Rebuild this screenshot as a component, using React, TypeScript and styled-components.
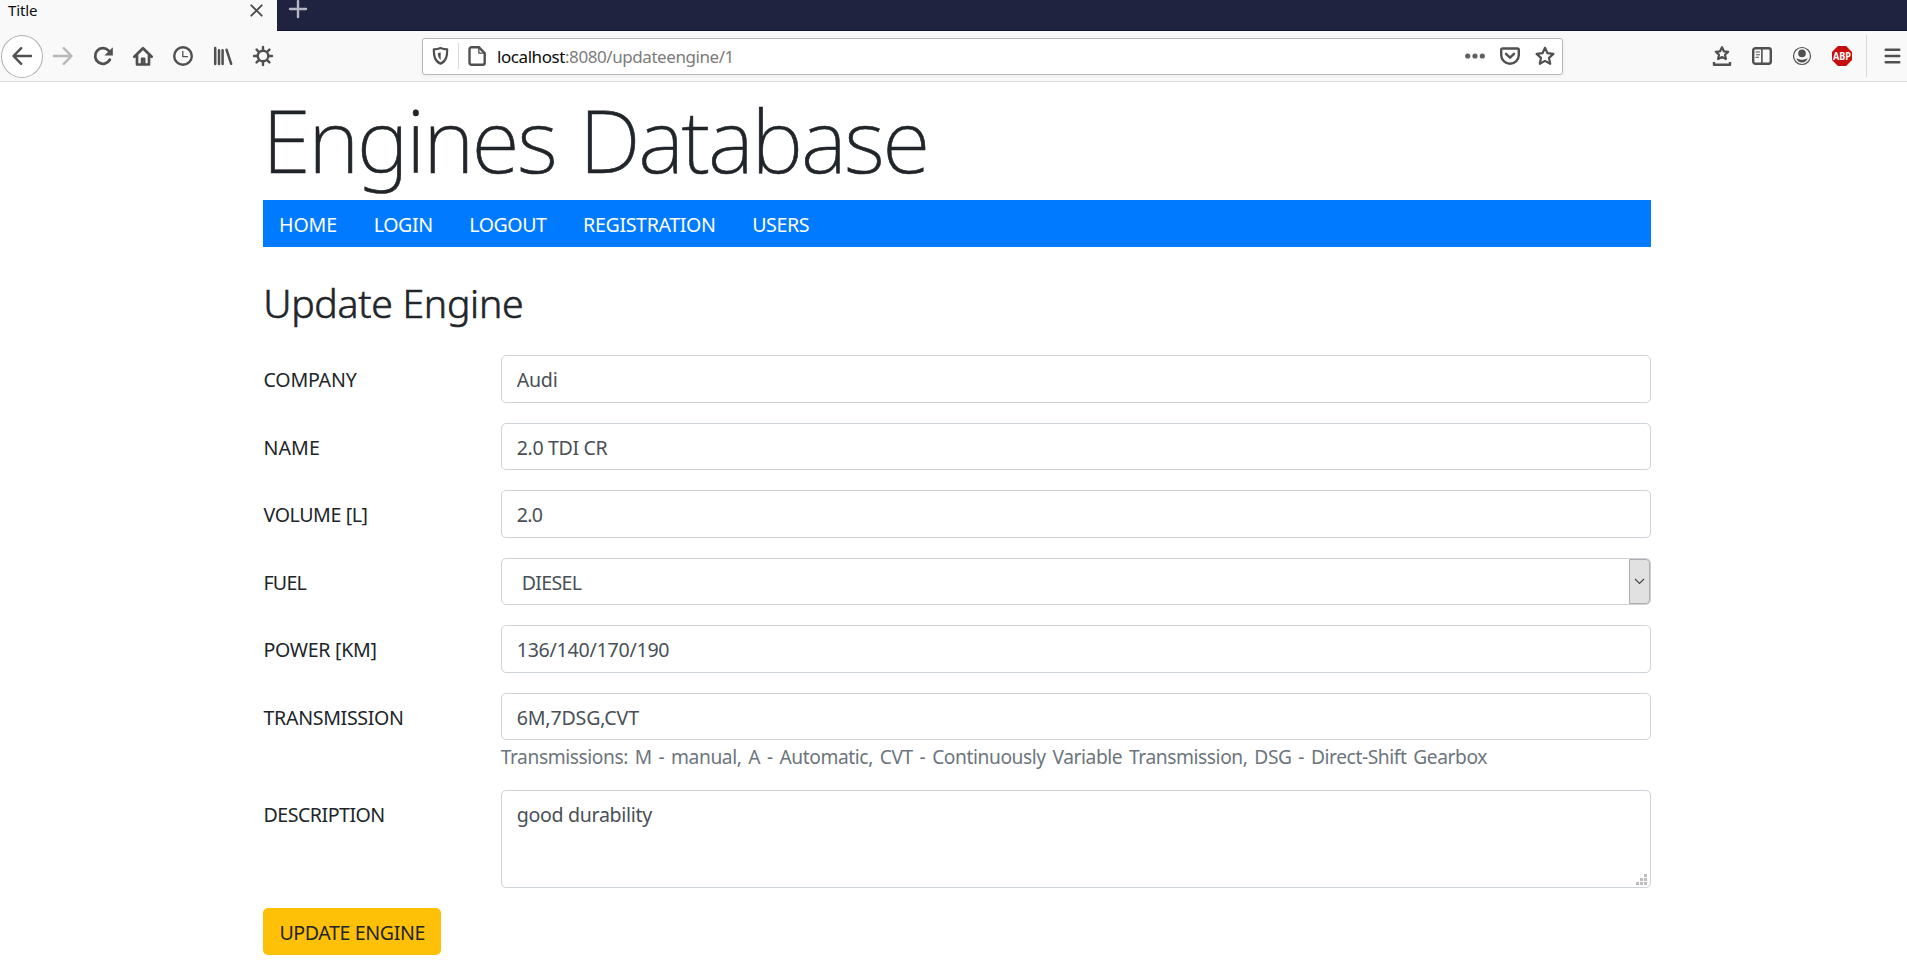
import React from 'react';
import styled, { createGlobalStyle } from 'styled-components';

const GlobalStyle = createGlobalStyle`
  *, *::before, *::after { box-sizing: border-box; }
  html, body { margin: 0; padding: 0; background: #fff; overflow: hidden; }
  body { font-family: "Noto Sans", "Open Sans", sans-serif; color: #212529; font-size: 19.6px; }
`;

/* ---------- browser chrome ---------- */
const TabStrip = styled.div`
  display: flex;
  height: 31px;
  background: #202340;
  border-bottom: 1px solid #14162e;
`;
const Tab = styled.div`
  display: flex;
  justify-content: space-between;
  width: 277px;
  height: 31px;
  padding: 0 13px 0 8px;
  background: #f9f9fa;
  color: #0c0c0d;
`;
const TabTitle = styled.span`
  font-size: 15px;
  line-height: 21px;
  letter-spacing: -0.1px;
`;
const CloseIcon = styled.svg`
  width: 15px;
  height: 15px;
  margin-top: 3px;
`;
const PlusIcon = styled.svg`
  width: 20px;
  height: 20px;
  margin: -1px 0 0 11px;
`;
const Toolbar = styled.div`
  display: flex;
  align-items: center;
  height: 51px;
  background: #f9f9fa;
  border-bottom: 1px solid #dfdfe0;
`;
const ToolButton = styled.span`
  display: flex;
  flex: none;
  align-items: center;
  justify-content: center;
  width: 40px;
  height: 40px;
`;
const BackButton = styled(ToolButton)`
  width: 42px;
  height: 43px;
  margin: 0 0 0 1px;
  border: 1px solid #b1b1b3;
  border-radius: 50%;
  background: #fff;
`;
const Glyph = styled.svg<{ $dim?: boolean; $thin?: boolean }>`
  display: block;
  width: 20px;
  height: 20px;
  overflow: visible;
  fill: none;
  stroke: ${p => (p.$dim ? '#b8b8b9' : '#505052')};
  stroke-width: ${p => (p.$thin ? 1.2 : 2.4)};
  stroke-linecap: round;
  stroke-linejoin: round;
`;
const UrlBar = styled.div`
  display: flex;
  align-items: center;
  width: 1141px;
  height: 37px;
  margin: 0 139px;
  border: 1px solid #b9b9bb;
  border-radius: 3px;
  background: #fff;
  box-shadow: 0 1px 4px rgba(0, 0, 0, 0.06);
`;
const UrlIcon = styled.span<{ $w: number }>`
  display: flex;
  justify-content: center;
  width: ${p => p.$w}px;
`;
const UrlDivider = styled.span`
  width: 1px;
  height: 26px;
  margin-left: 1px;
  background: #d9d9da;
`;
const UrlText = styled.span`
  flex: 1;
  padding: 2px 0 0 2px;
  font-size: 17px;
  line-height: 24px;
  letter-spacing: -0.43px;
  color: #7b7b7c;
`;
const UrlHost = styled.span`
  color: #0c0c0d;
`;
const BarDivider = styled.span`
  width: 1px;
  height: 42px;
  margin: 0 17px 0 4px;
  background: #dcdcdd;
`;

/* ---------- page ---------- */
const Container = styled.main`
  width: 1387.5px;
  margin-left: 263.2px;
`;
const Title = styled.h1`
  height: 118px;
  margin: 0 0 0 -1px;
  padding-top: 3px;
  font-size: 87.5px;
  font-weight: 200;
  line-height: 108px;
  letter-spacing: -2.2px;
  word-spacing: 3px;
  white-space: nowrap;
  -webkit-text-stroke: 0.6px #212529;
`;
const Nav = styled.nav`
  display: flex;
  align-items: center;
  gap: 36.6px;
  height: 47px;
  padding-left: 15.8px;
  background: #007bff;
`;
const NavLink = styled.a<{ $ls: number }>`
  padding-top: 2px;
  color: #fff;
  line-height: 30px;
  letter-spacing: ${p => p.$ls}px;
`;
const Heading = styled.h2`
  margin: 32px 0 28.2px;
  font-size: 39.2px;
  font-weight: 300;
  line-height: 48px;
  letter-spacing: -0.3px;
  -webkit-text-stroke: 0.6px #212529;
`;
const Form = styled.form`
  display: flex;
  flex-direction: column;
  gap: 20px;
`;
const Row = styled.div`
  display: grid;
  grid-template-columns: 237.5px 1150px;
  align-items: start;
`;
const Label = styled.label<{ $ls: number }>`
  padding-top: 10px;
  line-height: 30px;
  letter-spacing: ${p => p.$ls}px;
  text-indent: 0.3px;
`;
const Field = styled.div`
  position: relative;
`;
const Control = styled.input<{ $ls: number; $inset?: number; $h?: number }>`
  display: block;
  width: 100%;
  height: ${p => p.$h ?? 47.5}px;
  margin: 0;
  padding: 8.5px 15px 6.5px ${p => p.$inset ?? 15}px;
  border: 1px solid #ced4da;
  border-radius: 5px;
  background: #fff;
  color: #495057;
  font: inherit;
  line-height: 30px;
  letter-spacing: ${p => p.$ls}px;
  appearance: none;
  resize: none;
  outline: none;
  overflow: hidden;
`;
const SelectControl = styled(Control)`
  padding-top: 9.5px;
  padding-bottom: 5.5px;
`;
const SelectArrow = styled.span`
  position: absolute;
  top: 1px;
  right: 1px;
  bottom: 1px;
  display: flex;
  align-items: center;
  justify-content: center;
  width: 21px;
  border: 1px solid #adadad;
  border-radius: 0 4px 4px 0;
  background: #e1e1e1;
`;
const Grip = styled.svg`
  position: absolute;
  right: 4px;
  bottom: 3px;
  width: 11px;
  height: 11px;
  fill: #bdbdbd;
`;
const Hint = styled.small`
  display: block;
  margin: 4px 0 1px;
  font-size: 19.2px;
  line-height: 25px;
  letter-spacing: -0.42px;
  word-spacing: 2.25px;
  color: #6c757d;
  white-space: nowrap;
`;
const Submit = styled.button`
  align-self: flex-start;
  width: 178px;
  height: 47px;
  padding: 2px 0 0;
  border: 0;
  border-radius: 5px;
  background: #ffc107;
  color: #212529;
  font: inherit;
  letter-spacing: -0.39px;
`;

const STAR = 'M10 1.8l2.5 5.4 5.9.7-4.4 4 1.2 5.9-5.2-2.9-5.2 2.9L6 11.9l-4.4-4 5.9-.7z';

const links: [string, number][] = [
  ['HOME', -0.1],
  ['LOGIN', -0.4],
  ['LOGOUT', -0.45],
  ['REGISTRATION', -0.35],
  ['USERS', -0.42],
];

interface RowData {
  label: string;
  labelLs: number;
  value: string;
  valueLs: number;
  kind?: 'select' | 'textarea';
  hint?: string;
}

const rows: RowData[] = [
  { label: 'COMPANY', labelLs: -0.2, value: 'Audi', valueLs: -0.23 },
  { label: 'NAME', labelLs: 0.1, value: '2.0 TDI CR', valueLs: -0.35 },
  { label: 'VOLUME [L]', labelLs: -0.41, value: '2.0', valueLs: -0.7 },
  { label: 'FUEL', labelLs: -0.8, value: 'DIESEL', valueLs: -0.7, kind: 'select' },
  { label: 'POWER [KM]', labelLs: -0.3, value: '136/140/170/190', valueLs: -0.25 },
  {
    label: 'TRANSMISSION',
    labelLs: -0.32,
    value: '6M,7DSG,CVT',
    valueLs: -0.17,
    hint: 'Transmissions: M - manual, A - Automatic, CVT - Continuously Variable Transmission, DSG - Direct-Shift Gearbox',
  },
  { label: 'DESCRIPTION', labelLs: -0.5, value: 'good durability', valueLs: -0.32, kind: 'textarea' },
];

function FieldControl({ row }: { row: RowData }) {
  if (row.kind === 'select') {
    return (
      <>
        <SelectControl as="select" $ls={row.valueLs} $inset={20} defaultValue={row.value}>
          <option>{row.value}</option>
        </SelectControl>
        <SelectArrow>
          <svg width="11" height="7" viewBox="0 0 11 7" fill="none" stroke="#444" strokeWidth="1.2">
            <path d="M1 1l4.5 4.5L10 1" />
          </svg>
        </SelectArrow>
      </>
    );
  }
  if (row.kind === 'textarea') {
    return (
      <>
        <Control as="textarea" $ls={row.valueLs} $h={98} defaultValue={row.value} />
        <Grip viewBox="0 0 11 11">
          <rect x="8" y="0" width="3" height="3" />
          <rect x="4" y="4" width="3" height="3" />
          <rect x="8" y="4" width="3" height="3" />
          <rect x="0" y="8" width="3" height="3" />
          <rect x="4" y="8" width="3" height="3" />
          <rect x="8" y="8" width="3" height="3" />
        </Grip>
      </>
    );
  }
  return <Control $ls={row.valueLs} defaultValue={row.value} />;
}

function BrowserChrome() {
  return (
    <header>
      <TabStrip>
        <Tab>
          <TabTitle>Title</TabTitle>
          <CloseIcon viewBox="0 0 15 15" stroke="#4a4a4c" strokeWidth="1.9" strokeLinecap="round">
            <path d="M2.3 2.3l10.4 10.4M12.7 2.3L2.3 12.7" />
          </CloseIcon>
        </Tab>
        <PlusIcon viewBox="0 0 20 20" stroke="#b6b7c3" strokeWidth="2.4" strokeLinecap="round">
          <path d="M10 2v16M2 10h16" />
        </PlusIcon>
      </TabStrip>
      <Toolbar>
        <BackButton>
          <Glyph viewBox="0 0 20 20">
            <path d="M19 10H1.500M9.200 2.200L1.500 10l7.700 7.800" />
          </Glyph>
        </BackButton>
        <ToolButton>
          <Glyph viewBox="0 0 20 20" $dim>
            <path d="M1 10h17.500M10.800 2.200L18.500 10l-7.700 7.800" />
          </Glyph>
        </ToolButton>
        <ToolButton>
          <Glyph viewBox="0 0 20 20">
            <path d="M16.800 13.800A7.800 7.800 0 1 1 15.600 4.600" strokeWidth="2.800" />
            <path d="M19.800 1.200v8.400h-8.400z" fill="#505052" stroke="none" />
          </Glyph>
        </ToolButton>
        <ToolButton>
          <Glyph viewBox="0 0 20 20">
            <path d="M1.300 10.800L10 2.200l8.700 8.600M4 9.500v9h12v-9" strokeWidth="2.700" />
            <path d="M8.900 18v-5.300h2.400V18" strokeWidth="2.300" />
          </Glyph>
        </ToolButton>
        <ToolButton>
          <Glyph viewBox="0 0 20 20">
            <circle cx="10" cy="10" r="8.800" />
            <path d="M9.800 5.500v5.200h4.700" strokeWidth="1.300" />
          </Glyph>
        </ToolButton>
        <ToolButton>
          <Glyph viewBox="0 0 20 20">
            <path d="M2.200 2v16M6 4.200V18M9.600 4.200V18M13.600 3.800l4.600 14" strokeWidth="2.500" />
          </Glyph>
        </ToolButton>
        <ToolButton>
          <Glyph viewBox="0 0 20 20">
            <circle cx="10" cy="10" r="5.300" />
            <path d="M10 1v3M10 16v3M1 10h3M16 10h3M3.600 3.600l2 2M14.400 14.400l2 2M3.600 16.400l2-2M14.400 5.600l2-2" />
          </Glyph>
        </ToolButton>

        <UrlBar>
          <UrlIcon $w={34}>
            <Glyph viewBox="0 0 20 20">
              <path d="M10.500 2C8 3 5.800 3.300 3.800 3.400c0 6.600.8 11.600 6.700 14.300 5.900-2.700 6.700-7.700 6.700-14.300-2-.1-4.200-.4-6.700-1.400z" strokeWidth="2.200" />
              <path d="M10.700 6.300v7.600C8.700 12.300 7.800 10 7.800 7c1.100-.1 2-.3 2.900-.7z" fill="#505052" stroke="none" />
            </Glyph>
          </UrlIcon>
          <UrlDivider />
          <UrlIcon $w={36}>
            <Glyph viewBox="0 0 20 20">
              <path d="M4.500 1.200h7.300l5.900 5.900v9.700a2 2 0 0 1-2 2H4.500a2 2 0 0 1-2-2V3.200a2 2 0 0 1 2-2z" />
              <path d="M11.800 1.800v5.300h5.300" strokeWidth="1.300" />
            </Glyph>
          </UrlIcon>
          <UrlText>
            <UrlHost>localhost</UrlHost>:8080/updateengine/1
          </UrlText>
          <UrlIcon $w={35}>
            <Glyph viewBox="0 0 20 20">
              <g fill="#606062" stroke="none">
                <circle cx="2.700" cy="10" r="2.600" />
                <circle cx="10" cy="10" r="2.600" />
                <circle cx="17.300" cy="10" r="2.600" />
              </g>
            </Glyph>
          </UrlIcon>
          <UrlIcon $w={35}>
            <Glyph viewBox="0 0 20 20">
              <path d="M2.500 2.500h15a1.300 1.300 0 0 1 1.300 1.300V9a8.800 8.800 0 0 1-17.600 0V3.800a1.300 1.300 0 0 1 1.300-1.300z" />
              <path d="M6 7.800l4 3.900 4-3.900" />
            </Glyph>
          </UrlIcon>
          <UrlIcon $w={35}>
            <Glyph viewBox="0 0 20 20">
              <path d={STAR} strokeWidth="2.200" />
            </Glyph>
          </UrlIcon>
        </UrlBar>

        <ToolButton>
          <Glyph viewBox="0 0 20 20">
            <path d="M10 1.200l1.900 4.100 4.300.5-3.200 3 .9 4.300L10 11l-3.900 2.100.9-4.300-3.200-3 4.300-.5z" strokeWidth="2.200" />
            <path d="M2 16v2.800h16V16" strokeLinecap="butt" />
          </Glyph>
        </ToolButton>
        <ToolButton>
          <Glyph viewBox="0 0 20 20">
            <rect x="1.200" y="2.200" width="17.600" height="15.600" rx="2.200" />
            <path d="M9.900 2v16" strokeWidth="1.600" />
            <path d="M4 6h3.500M4.500 8.700h3M4 11.300h2.500" strokeWidth="1.100" />
          </Glyph>
        </ToolButton>
        <ToolButton>
          <Glyph viewBox="0 0 20 20" $thin>
            <circle cx="10" cy="10" r="8.500" />
            <circle cx="10" cy="7.400" r="3.800" fill="#505052" stroke="none" />
            <path d="M4.300 12.500c2 .2 2.300 1.200 5.700 1.200s3.700-1 5.700-1.200c-1 2.400-3.200 4-5.700 4s-4.700-1.600-5.700-4z" fill="#505052" stroke="none" />
          </Glyph>
        </ToolButton>
        <ToolButton>
          <Glyph viewBox="0 0 20 20">
            <path d="M5.900 0h8.200L20 5.900v8.200L14.100 20H5.900L0 14.100V5.900z" fill="#c70d0d" stroke="none" />
            <text x="10" y="13.800" textAnchor="middle" textLength="18" lengthAdjust="spacingAndGlyphs" fontSize="10.500" fontWeight="700" fill="#fff" stroke="none">
              ABP
            </text>
          </Glyph>
        </ToolButton>
        <BarDivider />
        <Glyph viewBox="0 0 20 20">
          <path d="M1.700 3.700h13.600M1.700 10h13.600M1.700 16.300h13.600" />
        </Glyph>
      </Toolbar>
    </header>
  );
}

export default function App() {
  return (
    <>
      <GlobalStyle />
      <BrowserChrome />
      <Container>
        <Title>Engines Database</Title>
        <Nav>
          {links.map(([text, ls]) => (
            <NavLink key={text} $ls={ls}>
              {text}
            </NavLink>
          ))}
        </Nav>
        <Heading>Update Engine</Heading>
        <Form>
          {rows.map(row => (
            <Row key={row.label}>
              <Label $ls={row.labelLs}>{row.label}</Label>
              <Field>
                <FieldControl row={row} />
                {row.hint && <Hint>{row.hint}</Hint>}
              </Field>
            </Row>
          ))}
          <Submit type="button">UPDATE ENGINE</Submit>
        </Form>
      </Container>
    </>
  );
}
